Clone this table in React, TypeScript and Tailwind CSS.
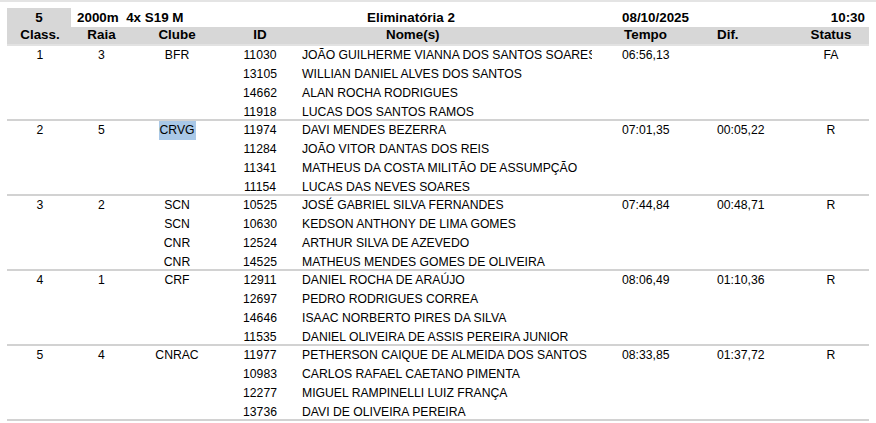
type Athlete = { id: string; name: string; club?: string };

type Crew = {
  pos: string;
  lane: string;
  club: string;
  time: string;
  diff: string;
  status: string;
  highlight?: boolean;
  athletes: Athlete[];
};

const CREWS: Crew[] = [
  {
    pos: '1', lane: '3', club: 'BFR', time: '06:56,13', diff: '', status: 'FA',
    athletes: [
      { id: '11030', name: 'JOÃO GUILHERME VIANNA DOS SANTOS SOARES' },
      { id: '13105', name: 'WILLIAN DANIEL ALVES DOS SANTOS' },
      { id: '14662', name: 'ALAN ROCHA RODRIGUES' },
      { id: '11918', name: 'LUCAS DOS SANTOS RAMOS' },
    ],
  },
  {
    pos: '2', lane: '5', club: 'CRVG', time: '07:01,35', diff: '00:05,22', status: 'R', highlight: true,
    athletes: [
      { id: '11974', name: 'DAVI MENDES BEZERRA' },
      { id: '11284', name: 'JOÃO VITOR DANTAS DOS REIS' },
      { id: '11341', name: 'MATHEUS DA COSTA MILITÃO DE ASSUMPÇÃO' },
      { id: '11154', name: 'LUCAS DAS NEVES SOARES' },
    ],
  },
  {
    pos: '3', lane: '2', club: 'SCN', time: '07:44,84', diff: '00:48,71', status: 'R',
    athletes: [
      { id: '10525', name: 'JOSÉ GABRIEL SILVA FERNANDES' },
      { id: '10630', name: 'KEDSON ANTHONY DE LIMA GOMES', club: 'SCN' },
      { id: '12524', name: 'ARTHUR SILVA DE AZEVEDO', club: 'CNR' },
      { id: '14525', name: 'MATHEUS MENDES GOMES DE OLIVEIRA', club: 'CNR' },
    ],
  },
  {
    pos: '4', lane: '1', club: 'CRF', time: '08:06,49', diff: '01:10,36', status: 'R',
    athletes: [
      { id: '12911', name: 'DANIEL ROCHA DE ARAÚJO' },
      { id: '12697', name: 'PEDRO RODRIGUES CORREA' },
      { id: '14646', name: 'ISAAC NORBERTO PIRES DA SILVA' },
      { id: '11535', name: 'DANIEL OLIVEIRA DE ASSIS PEREIRA JUNIOR' },
    ],
  },
  {
    pos: '5', lane: '4', club: 'CNRAC', time: '08:33,85', diff: '01:37,72', status: 'R',
    athletes: [
      { id: '11977', name: 'PETHERSON CAIQUE DE ALMEIDA DOS SANTOS' },
      { id: '10983', name: 'CARLOS RAFAEL CAETANO PIMENTA' },
      { id: '12277', name: 'MIGUEL RAMPINELLI LUIZ FRANÇA' },
      { id: '13736', name: 'DAVI DE OLIVEIRA PEREIRA' },
    ],
  },
];

function CrewGroup({ crew, first }: { crew: Crew; first: boolean }) {
  return (
    <div
      className={`h-[75px] border-t-2 ${first ? 'border-[#e2e2e2]' : 'border-[#d2d2d2]'}`}
    >
      {crew.athletes.map((a, i) => {
        const club = i === 0 ? crew.club : a.club ?? '';
        return (
          <div key={a.id} className="flex h-[19px] leading-[19px]">
            <div className="w-[66px] text-center">{i === 0 ? crew.pos : ''}</div>
            <div className="w-[57px] text-center">{i === 0 ? crew.lane : ''}</div>
            <div className="w-[94px] text-center">
              {i === 0 && crew.highlight ? (
                <span className="inline-block bg-[#a9c8e7] px-[1px] leading-[19px]">{club}</span>
              ) : (
                club
              )}
            </div>
            <div className="w-[72px] text-center">{a.id}</div>
            <div className="w-[296px] overflow-hidden whitespace-nowrap pl-[6px]">{a.name}</div>
            <div className="w-[125px] pl-[30px]">{i === 0 ? crew.time : ''}</div>
            <div className="w-[78px]">{i === 0 ? crew.diff : ''}</div>
            <div className="w-[72px] text-center">{i === 0 ? crew.status : ''}</div>
          </div>
        );
      })}
    </div>
  );
}

export default function App() {
  return (
    <div
      className="h-[423px] w-[876px] overflow-hidden border-t-2 border-[#e4e4e4] bg-white pt-[6px] text-[12.2px] text-black"
      style={{ fontFamily: '"Liberation Sans", Arial, sans-serif' }}
    >
      <div className="px-[7px]">
        {/* event line */}
        <div className="flex h-[19px] text-[13.4px] font-bold leading-[19px]">
          <div className="w-[64px] bg-[#d7d7d7] text-center">5</div>
          <div className="w-[225px] whitespace-pre pl-[6px]">2000m  4x S19 M</div>
          <div className="w-[230px] text-center">Eliminatória 2</div>
          <div className="w-[269px] pl-[96px]">08/10/2025</div>
          <div className="flex-1 pr-[4px] text-right">10:30</div>
        </div>

        {/* column titles */}
        <div className="flex h-[17px] bg-[#d7d7d7] text-[13.4px] font-bold leading-[16px]">
          <div className="w-[66px] text-center">Class.</div>
          <div className="w-[57px] text-center">Raia</div>
          <div className="w-[94px] text-center">Clube</div>
          <div className="w-[72px] text-center">ID</div>
          <div className="w-[296px] pl-[90px]">Nome(s)</div>
          <div className="w-[125px] pl-[32px]">Tempo</div>
          <div className="w-[78px]">Dif.</div>
          <div className="w-[72px] text-center">Status</div>
        </div>

        {CREWS.map((c, i) => (
          <CrewGroup key={c.pos} crew={c} first={i === 0} />
        ))}
        <div className="border-t-2 border-[#d2d2d2]" />
      </div>
    </div>
  );
}
